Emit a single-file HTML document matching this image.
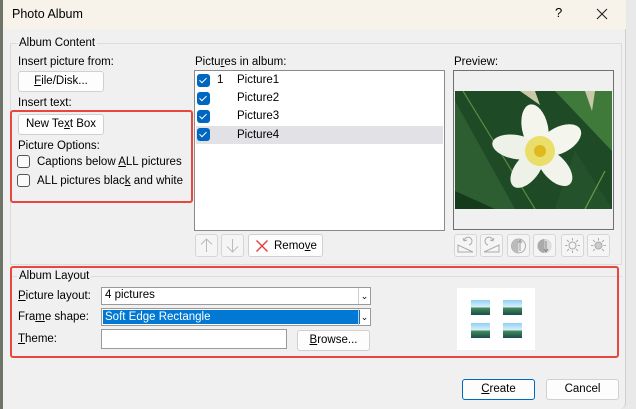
<!DOCTYPE html>
<html><head><meta charset="utf-8"><style>
*{box-sizing:border-box;margin:0;padding:0}
body{width:636px;height:409px;overflow:hidden;background:#e9e9e9;font-family:"Liberation Sans",sans-serif;font-size:11.5px;color:#000;position:relative}
.a{position:absolute}
.btn{position:absolute;background:#fdfdfd;border:1px solid #d0d0d0;border-radius:3px;text-align:center;line-height:19px;font-size:11.5px}
.cb{position:absolute;width:13px;height:13px;border:1px solid #555;border-radius:3px;background:#fafafa}
.bc{position:absolute;width:13px;height:13px;border-radius:3px;background:#0067c0}
.bc:after{content:"";position:absolute;left:4px;top:2px;width:3px;height:6px;border:solid #fff;border-width:0 1.3px 1.3px 0;transform:rotate(45deg)}
.ib{position:absolute;top:234px;width:23px;height:23px;border:1px solid #d6d6d6;border-radius:3px;background:#f5f5f5}
.red{position:absolute;border:2px solid #e8473f;border-radius:3px}
u{text-decoration:underline}
</style></head><body>
<div class="a" style="left:0;top:0;width:4px;height:409px;background:#6e7467"></div>
<div class="a" style="left:3px;top:0;width:623px;height:409px;background:#f0f0f0;border-radius:0 0 6px 0;border-right:1px solid #cfcfcf"></div>
<div class="a" style="left:3px;top:0;width:623px;height:29px;background:#f8f3ea"></div>
<div class="a" style="left:12px;top:7px;font-size:12.5px">Photo Album</div>
<div class="a" style="left:555px;top:5px;font-size:13px">?</div>
<svg class="a" style="left:596px;top:8px" width="12" height="12"><path d="M1 1L11 11M11 1L1 11" stroke="#222" stroke-width="1.1"/></svg>

<div class="a" style="left:10px;top:43px;width:612px;height:222px;border:1px solid #dcdcdc"></div>
<div class="a" style="left:17px;top:37px;background:#f0f0f0;padding:0 2px">Album Content</div>
<div class="a" style="left:18px;top:56px">Insert picture from:</div>
<div class="btn" style="left:18px;top:71px;width:86px;height:21px"><u>F</u>ile/Disk...</div>
<div class="a" style="left:18px;top:97px">Insert text:</div>
<div class="btn" style="left:18px;top:114px;width:86px;height:21px">New Te<u>x</u>t Box</div>
<div class="a" style="left:18px;top:140px">Picture Options:</div>
<div class="cb" style="left:17px;top:155px"></div>
<div class="a" style="left:37px;top:156px">Captions below <u>A</u>LL pictures</div>
<div class="cb" style="left:17px;top:174px"></div>
<div class="a" style="left:37px;top:175px">ALL pictures blac<u>k</u> and white</div>
<div class="red" style="left:10px;top:110px;width:183px;height:93px"></div>

<div class="a" style="left:195px;top:56px">Pictu<u>r</u>es in album:</div>
<div class="a" style="left:194px;top:70px;width:251px;height:161px;background:#fff;border:1px solid #8a8a8a"></div>
<div class="a" style="left:196px;top:126px;width:247px;height:18px;background:#e1e1e6"></div>
<div class="bc" style="left:197px;top:74px"></div><div class="a" style="left:217px;top:74px">1</div><div class="a" style="left:237px;top:74px">Picture1</div>
<div class="bc" style="left:197px;top:92px"></div><div class="a" style="left:237px;top:92px">Picture2</div>
<div class="bc" style="left:197px;top:110px"></div><div class="a" style="left:237px;top:110px">Picture3</div>
<div class="bc" style="left:197px;top:128px"></div><div class="a" style="left:237px;top:129px">Picture4</div>
<div class="ib" style="left:195px"><svg width="21" height="21"><path d="M10.5 4V17M5 9.5L10.5 4L16 9.5" stroke="#bbb" fill="none"/></svg></div>
<div class="ib" style="left:221px"><svg width="21" height="21"><path d="M10.5 4V17M5 11.5L10.5 17L16 11.5" stroke="#bbb" fill="none"/></svg></div>
<div class="btn" style="left:248px;top:234px;width:75px;height:23px;line-height:22px;text-align:left;padding-left:25px">Remo<u>v</u>e</div>
<svg class="a" style="left:256px;top:240px" width="12" height="12"><path d="M0.5 0.5L11.5 11.5M11.5 0.5L0.5 11.5" stroke="#e03c3c" stroke-width="1.3"/></svg>

<div class="a" style="left:454px;top:56px">Preview:</div>
<div class="a" style="left:453px;top:70px;width:161px;height:160px;border:1px solid #707070;background:#f0f0f0"></div>
<svg class="a" style="left:455px;top:91px" width="157" height="118" viewBox="0 0 157 118">
<rect width="157" height="118" fill="#1f4a26"/>
<path d="M0 10L60 118H0Z" fill="#2c5e32"/><path d="M100 0L157 60V0Z" fill="#3f7a3a"/><path d="M120 60L157 118H100Z" fill="#24532b"/>
<path d="M0 100L40 118H0Z" fill="#163a1c"/><path d="M8 0L80 118" stroke="#5a8c44" stroke-width="1.2"/><path d="M150 80L130 118" stroke="#6a9c48" stroke-width="1.2"/>
<path d="M65 0L85 14L80 0Z" fill="#c9c9a8"/><path d="M130 0L137 20L140 0Z" fill="#c9c9a8"/>
<g transform="translate(85,60)">
<ellipse cx="-5" cy="-23" rx="13" ry="24" transform="rotate(-12 -5 -23)" fill="#f4f6ee"/>
<ellipse cx="20" cy="-11" rx="13" ry="23" transform="rotate(62 20 -11)" fill="#f4f6ee"/>
<ellipse cx="15" cy="17" rx="12" ry="22" transform="rotate(137 15 17)" fill="#f2f4ec"/>
<ellipse cx="-13" cy="18" rx="12" ry="22" transform="rotate(-142 -13 18)" fill="#eef1e8"/>
<ellipse cx="-24" cy="-4" rx="12" ry="24" transform="rotate(-80 -24 -4)" fill="#eef1e8"/>
<circle r="15" fill="#e8d84a" opacity=".8"/><circle r="6" fill="#e0b820"/>
</g></svg>
<div class="ib" style="left:454px"><svg width="21" height="21"><path d="M3 17H18L3 10Z" stroke="#aaa" fill="none"/><path d="M9 6A4 4 0 1 1 14 10M9 6L8 3M9 6L12 5" stroke="#aaa" fill="none"/></svg></div>
<div class="ib" style="left:480px"><svg width="21" height="21"><path d="M3 17H18V10Z" stroke="#aaa" fill="none"/><path d="M12 6A4 4 0 1 0 7 10M12 6L13 3M12 6L9 5" stroke="#aaa" fill="none"/></svg></div>
<div class="ib" style="left:507px"><svg width="21" height="21"><circle cx="10.5" cy="11" r="7" stroke="#aaa" fill="#f5f5f5"/><path d="M10.5 4A7 7 0 0 0 10.5 18Z" fill="#bbb"/><path d="M12 16V6M10 8L12 5L14 8" stroke="#999" fill="none"/></svg></div>
<div class="ib" style="left:533px"><svg width="21" height="21"><circle cx="10.5" cy="11" r="7" fill="#aaa"/><path d="M10.5 4A7 7 0 0 1 10.5 18Z" fill="#ddd"/><path d="M12 6V16M10 14L12 17L14 14" stroke="#888" fill="none"/></svg></div>
<div class="ib" style="left:561px"><svg width="21" height="21"><circle cx="10.5" cy="10.5" r="3.5" stroke="#aaa" fill="none"/><path d="M10.5 3V5.5M10.5 15.5V18M3 10.5H5.5M15.5 10.5H18M5 5L7 7M14 14L16 16M16 5L14 7M5 16L7 14" stroke="#aaa"/></svg></div>
<div class="ib" style="left:587px"><svg width="21" height="21"><circle cx="10.5" cy="10.5" r="3.5" stroke="#aaa" fill="#ccc"/><path d="M10.5 3V5.5M3 10.5H5.5M15.5 10.5H18M5 5L7 7M16 5L14 7M5 16L7 14M14 14L16 16" stroke="#aaa"/></svg></div>

<div class="a" style="left:10px;top:276px;width:612px;height:0;border-top:1px solid #dcdcdc"></div>
<div class="a" style="left:17px;top:270px;background:#f0f0f0;padding:0 2px">Album Layout</div>
<div class="a" style="left:18px;top:290px"><u>P</u>icture layout:</div>
<div class="a" style="left:101px;top:287px;width:270px;height:18px;background:#fff;border:1px solid #9a9a9a;padding:1px 0 0 3px">4 pictures</div>
<div class="a" style="left:358px;top:288px;width:12px;height:16px;border-left:1px solid #ccc;font-size:9px;text-align:center;line-height:16px">⌄</div>
<div class="a" style="left:18px;top:311px">Fra<u>m</u>e shape:</div>
<div class="a" style="left:101px;top:308px;width:270px;height:18px;background:#fff;border:1px solid #9a9a9a"></div>
<div class="a" style="left:103px;top:310px;width:257px;height:14px;background:#0078d4;color:#fff;padding-left:2px;line-height:14px">Soft Edge Rectangle</div>
<div class="a" style="left:358px;top:309px;width:12px;height:16px;border-left:1px solid #ccc;font-size:9px;text-align:center;line-height:16px">⌄</div>
<div class="a" style="left:18px;top:333px"><u>T</u>heme:</div>
<div class="a" style="left:101px;top:329px;width:186px;height:20px;background:#fff;border:1px solid #9a9a9a"></div>
<div class="btn" style="left:297px;top:330px;width:73px;height:21px"><u>B</u>rowse...</div>
<div class="a" style="left:457px;top:288px;width:78px;height:62px;background:#fff"></div>
<svg class="a" style="left:471px;top:300px" width="52" height="38">
<defs><linearGradient id="g" x1="0" y1="0" x2="0" y2="1"><stop offset="0" stop-color="#8fd0f4"/><stop offset=".45" stop-color="#d8eefa"/><stop offset=".55" stop-color="#3f8a5a"/><stop offset="1" stop-color="#1e4a4e"/></linearGradient></defs>
<rect x="0" y="0" width="19" height="15" fill="url(#g)"/><rect x="32" y="0" width="19" height="15" fill="url(#g)"/>
<rect x="0" y="23" width="19" height="15" fill="url(#g)"/><rect x="32" y="23" width="19" height="15" fill="url(#g)"/></svg>
<div class="red" style="left:10px;top:266px;width:609px;height:92px"></div>

<div class="btn" style="left:462px;top:379px;width:73px;height:21px;border-color:#0067c0"><u>C</u>reate</div>
<div class="btn" style="left:546px;top:379px;width:73px;height:21px">Cancel</div>
</body></html>
